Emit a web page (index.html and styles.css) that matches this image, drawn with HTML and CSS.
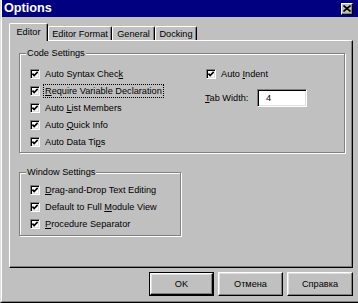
FILE: index.html
```html
<!DOCTYPE html>
<html>
<head>
<meta charset="utf-8">
<title>Options</title>
<link rel="stylesheet" href="styles.css">
</head>
<body>
<div class="window">
  <div class="window-inner">
    <div class="titlebar">
      <span class="title">Options</span>
      <span class="close-btn">
        <svg width="8" height="7" viewBox="0 0 8 7"><path d="M0.5 0.5 L7.5 6.5 M7.5 0.5 L0.5 6.5" stroke="#000" stroke-width="1.6" fill="none"/></svg>
      </span>
    </div>
    <div class="tabs">
      <div class="tab tab-active tab-w1">Editor</div>
      <div class="tab tab-w2">Editor Format</div>
      <div class="tab tab-w3">General</div>
      <div class="tab tab-w4">Docking</div>
    </div>
    <div class="panel">
      <div class="group group-code">
        <div class="group-title">Code Settings</div>
        <div class="code-body">
          <div class="col-left">
            <div class="row"><span class="cb"><svg width="6" height="6" viewBox="0 0 6 6"><path d="M0.4 2.6 L2.2 4.6 L5.7 0.9" stroke="#000" stroke-width="1.7" fill="none"/></svg></span><span>Auto Syntax Chec<u>k</u></span></div>
            <div class="row"><span class="cb"><svg width="6" height="6" viewBox="0 0 6 6"><path d="M0.4 2.6 L2.2 4.6 L5.7 0.9" stroke="#000" stroke-width="1.7" fill="none"/></svg></span><span class="focus"><u>R</u>equire Variable Declaration</span></div>
            <div class="row"><span class="cb"><svg width="6" height="6" viewBox="0 0 6 6"><path d="M0.4 2.6 L2.2 4.6 L5.7 0.9" stroke="#000" stroke-width="1.7" fill="none"/></svg></span><span>Auto <u>L</u>ist Members</span></div>
            <div class="row"><span class="cb"><svg width="6" height="6" viewBox="0 0 6 6"><path d="M0.4 2.6 L2.2 4.6 L5.7 0.9" stroke="#000" stroke-width="1.7" fill="none"/></svg></span><span>Auto <u>Q</u>uick Info</span></div>
            <div class="row"><span class="cb"><svg width="6" height="6" viewBox="0 0 6 6"><path d="M0.4 2.6 L2.2 4.6 L5.7 0.9" stroke="#000" stroke-width="1.7" fill="none"/></svg></span><span>Auto Data Ti<u>p</u>s</span></div>
          </div>
          <div class="col-right">
            <div class="row"><span class="cb"><svg width="6" height="6" viewBox="0 0 6 6"><path d="M0.4 2.6 L2.2 4.6 L5.7 0.9" stroke="#000" stroke-width="1.7" fill="none"/></svg></span><span>Auto <u>I</u>ndent</span></div>
            <div class="tabwidth">
              <span class="tw-label"><u>T</u>ab Width:</span>
              <span class="textbox">4</span>
            </div>
          </div>
        </div>
      </div>
      <div class="group group-window">
        <div class="group-title">Window Settings</div>
        <div class="window-body">
          <div class="row"><span class="cb"><svg width="6" height="6" viewBox="0 0 6 6"><path d="M0.4 2.6 L2.2 4.6 L5.7 0.9" stroke="#000" stroke-width="1.7" fill="none"/></svg></span><span><u>D</u>rag-and-Drop Text Editing</span></div>
          <div class="row"><span class="cb"><svg width="6" height="6" viewBox="0 0 6 6"><path d="M0.4 2.6 L2.2 4.6 L5.7 0.9" stroke="#000" stroke-width="1.7" fill="none"/></svg></span><span>Default to Full <u>M</u>odule View</span></div>
          <div class="row"><span class="cb"><svg width="6" height="6" viewBox="0 0 6 6"><path d="M0.4 2.6 L2.2 4.6 L5.7 0.9" stroke="#000" stroke-width="1.7" fill="none"/></svg></span><span><u>P</u>rocedure Separator</span></div>
        </div>
      </div>
    </div>
    <div class="buttons">
      <div class="btn btn-default btn-w1"><span class="btn-face">OK</span></div>
      <div class="btn btn-w1"><span class="btn-face">Отмена</span></div>
      <div class="btn btn-w2"><span class="btn-face">Справка</span></div>
    </div>
  </div>
</div>
</body>
</html>
```
FILE: styles.css
```css
html, body {
  margin: 0;
  padding: 0;
}
body {
  width: 358px;
  height: 303px;
  overflow: hidden;
  background: #c0c0c0;
  font-family: "Liberation Sans", Arial, sans-serif;
  font-size: 9.2px;
  color: #000;
}
.window {
  width: 358px;
  height: 303px;
  box-sizing: border-box;
  border-left: 1px solid #dfdfdf;
  border-bottom: 1px solid #000;
  background: #c0c0c0;
}
.window-inner {
  height: 100%;
  box-sizing: border-box;
  border-left: 1px solid #fff;
  border-bottom: 1px solid #808080;
  display: flex;
  flex-direction: column;
}
.titlebar {
  height: 17px;
  flex: none;
  background: #000080;
  display: flex;
  align-items: center;
  justify-content: space-between;
  padding: 0 5px 0 2px;
}
.title {
  color: #fff;
  font-weight: bold;
  font-size: 12.7px;
  line-height: 17px;
}
.close-btn {
  width: 12px;
  height: 12px;
  box-sizing: border-box;
  background: #c0c0c0;
  border-top: 1px solid #fff;
  border-left: 1px solid #fff;
  border-right: 1px solid #000;
  border-bottom: 1px solid #000;
  box-shadow: inset -1px -1px 0 #808080;
  display: flex;
  align-items: center;
  justify-content: center;
  padding: 0 1px 1px 0;
}
.close-btn svg {
  display: block;
}
.tabs {
  flex: none;
  height: 17px;
  margin: 6px 0 0 7px;
  display: flex;
  align-items: flex-end;
  position: relative;
  z-index: 1;
}
.tab {
  height: 14px;
  box-sizing: border-box;
  border-top: 1px solid #fff;
  border-left: 1px solid #fff;
  border-right: 1px solid #000;
  border-radius: 2px 2px 0 0;
  box-shadow: inset -1px 0 0 #808080;
  background: #c0c0c0;
  display: flex;
  align-items: center;
  justify-content: center;
  white-space: nowrap;
}
.tab-active {
  height: 18px;
  margin-bottom: -1px;
  padding-bottom: 1px;
}
.tab-w1 { width: 39px; }
.tab-w2 { width: 64px; }
.tab-w3 { width: 43px; }
.tab-w4 { width: 42px; }
.panel {
  flex: none;
  width: 344px;
  height: 228px;
  box-sizing: border-box;
  margin-left: 7px;
  border-top: 1px solid #fff;
  border-left: 1px solid #fff;
  border-right: 1px solid #000;
  border-bottom: 1px solid #000;
  box-shadow: inset -1px -1px 0 #808080;
  padding: 12px 7px 0 9px;
}
.group {
  box-sizing: border-box;
  border: 1px solid #808080;
  box-shadow: inset 1px 1px 0 #fff, 1px 1px 0 #fff;
  display: flex;
  flex-direction: column;
}
.group-title {
  align-self: flex-start;
  margin: -6px 0 0 6px;
  padding: 0 1px;
  height: 11px;
  line-height: 11px;
  background: #c0c0c0;
}
.code-body {
  display: flex;
  padding: 6px 0 2px 10px;
}
.col-left {
  width: 176px;
  display: flex;
  flex-direction: column;
}
.col-right {
  display: flex;
  flex-direction: column;
}
.row {
  height: 17px;
  display: flex;
  align-items: center;
  gap: 5px;
  white-space: nowrap;
}
.cb {
  width: 10px;
  height: 10px;
  box-sizing: border-box;
  background: #fff;
  border-top: 1px solid #808080;
  border-left: 1px solid #808080;
  border-right: 1px solid #fff;
  border-bottom: 1px solid #fff;
  box-shadow: inset 1px 1px 0 #000, inset -1px -1px 0 #dfdfdf;
  display: flex;
  align-items: center;
  justify-content: center;
  flex: none;
}
.cb svg {
  display: block;
}
.focus {
  outline: 1px dotted #000;
  outline-offset: 1px;
}
.tabwidth {
  margin-top: 7px;
  height: 18px;
  display: flex;
  align-items: center;
}
.tw-label {
  width: 52px;
  margin-left: -1px;
  white-space: nowrap;
}
.textbox {
  width: 50px;
  height: 18px;
  box-sizing: border-box;
  background: #fff;
  border-top: 1px solid #808080;
  border-left: 1px solid #808080;
  border-right: 1px solid #fff;
  border-bottom: 1px solid #fff;
  box-shadow: inset 1px 1px 0 #000, inset -1px -1px 0 #dfdfdf;
  padding-left: 8px;
  display: flex;
  align-items: center;
}
.group-window {
  width: 162px;
  margin-top: 19px;
}
.window-body {
  display: flex;
  flex-direction: column;
  padding: 3px 0 3px 10px;
}
.buttons {
  flex: none;
  height: 24px;
  margin-top: 4px;
  padding-right: 5px;
  display: flex;
  justify-content: flex-end;
  gap: 4px;
}
.btn {
  height: 24px;
  box-sizing: border-box;
  display: flex;
}
.btn-w1 { width: 65px; }
.btn-w2 { width: 66px; }
.btn-face {
  flex: 1;
  box-sizing: border-box;
  border-top: 1px solid #fff;
  border-left: 1px solid #fff;
  border-right: 1px solid #000;
  border-bottom: 1px solid #000;
  box-shadow: inset -1px -1px 0 #808080, inset 1px 1px 0 #dfdfdf;
  display: flex;
  align-items: center;
  justify-content: center;
}
.btn-default {
  border: 1px solid #000;
}
```
